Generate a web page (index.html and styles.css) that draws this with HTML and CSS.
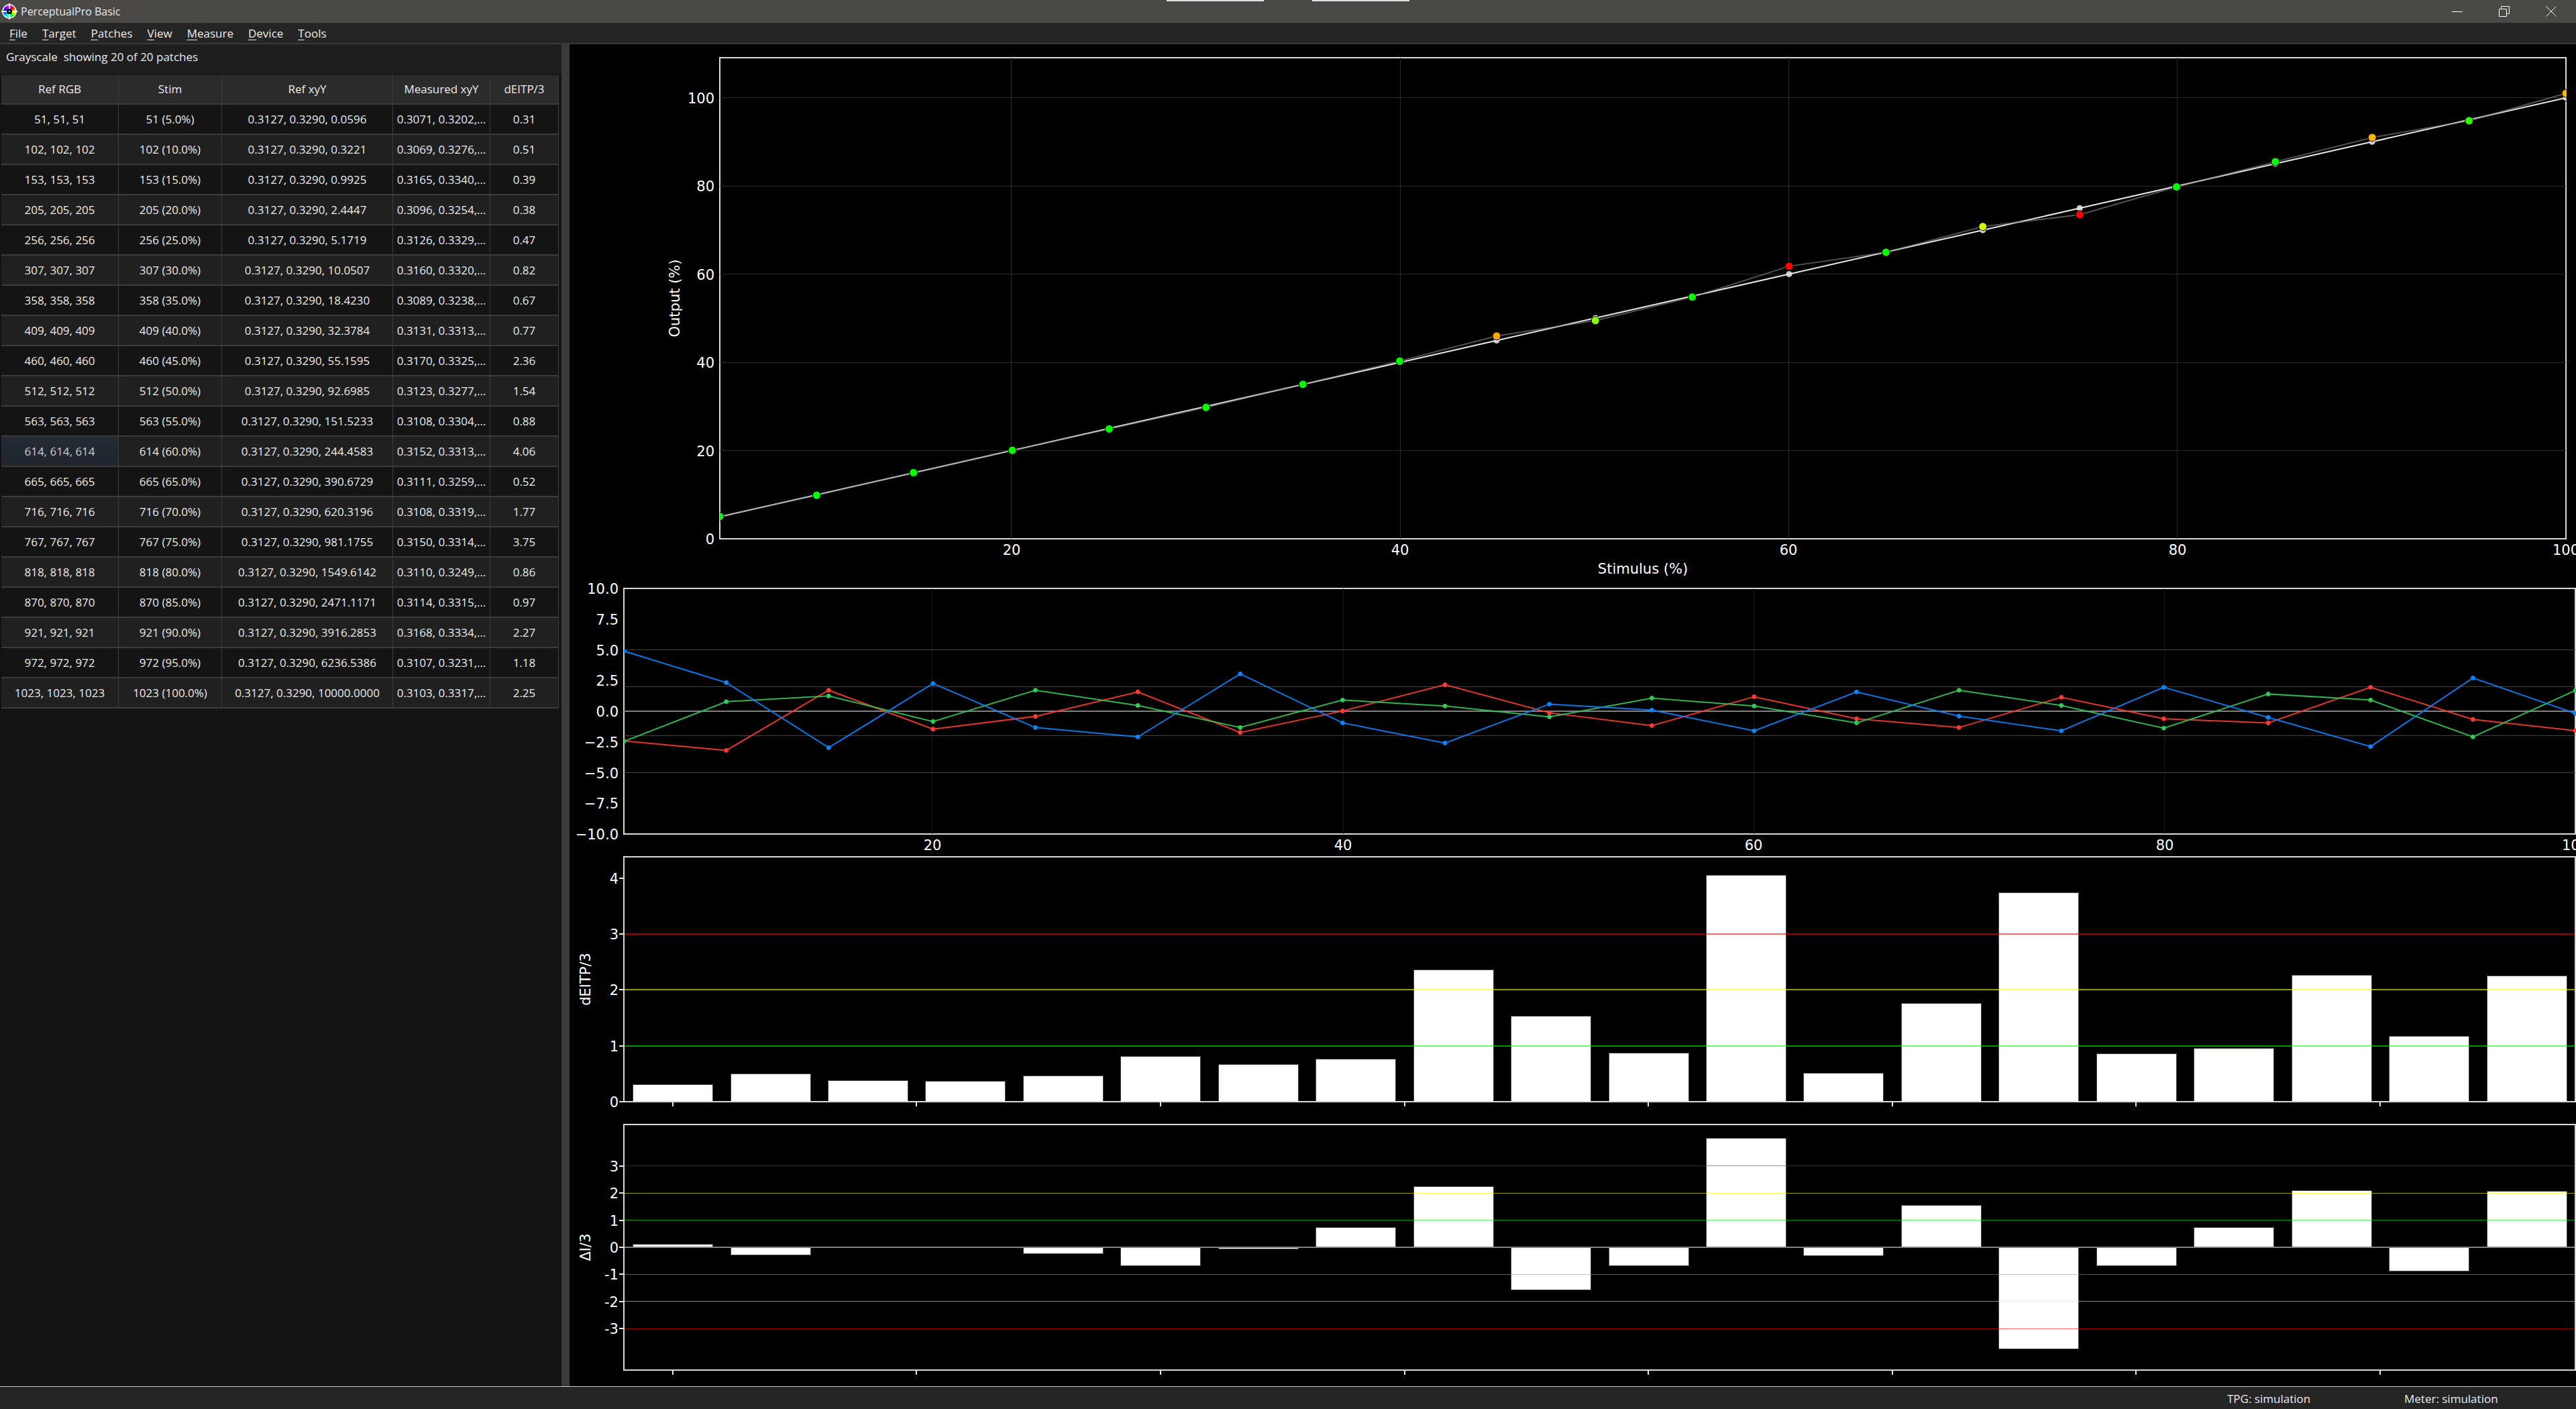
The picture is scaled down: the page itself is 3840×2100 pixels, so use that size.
FILE: index.html
```html
<!DOCTYPE html>
<html lang="en">
<head>
<meta charset="utf-8">
<title>PerceptualPro Basic</title>
<link rel="stylesheet" href="styles.css">
</head>
<body>
<header class="titlebar">
  <div class="logo">
    <svg viewBox="0 0 24 24" width="24" height="24" aria-hidden="true">
      <circle cx="12" cy="12" r="10" fill="none" stroke="#fff" stroke-width="1.5"/>
      <path d="M12 0v8M12 16v8M0 12h8M16 12h8" stroke="#fff" stroke-width="2"/>
      <circle cx="12" cy="12" r="4" fill="#000"/>
      <circle cx="12" cy="12" r="1" fill="#fff"/>
    </svg>
  </div>
  <h1 class="app-title">PerceptualPro Basic</h1>
  <div class="snap-marks"><span></span><span></span></div>
  <div class="window-buttons">
    <button aria-label="Minimize"><svg viewBox="0 0 16 16" width="16" height="16"><path d="M0 8.500h16"/></svg></button>
    <button aria-label="Restore"><svg viewBox="0 0 16 16" width="16" height="16"><path d="M.5 4.500h11v11h-11zM3.500 4V.5h12v11H12"/></svg></button>
    <button aria-label="Close"><svg viewBox="0 0 16 16" width="16" height="16"><path d="M.5.5l15 15M15.500.5l-15 15"/></svg></button>
  </div>
</header>
<nav class="menubar">
  <button><u>F</u>ile</button>
  <button><u>T</u>arget</button>
  <button><u>P</u>atches</button>
  <button><u>V</u>iew</button>
  <button><u>M</u>easure</button>
  <button><u>D</u>evice</button>
  <button><u>T</u>ools</button>
</nav>
<main class="workspace">
  <section class="patches">
    <p class="summary">Grayscale  showing 20 of 20 patches</p>
    <div class="table-wrap">
      <table>
        <colgroup><col class="c-rgb"><col class="c-stim"><col class="c-ref"><col class="c-meas"><col class="c-de"></colgroup>
        <thead><tr><th>Ref RGB</th><th>Stim</th><th>Ref xyY</th><th>Measured xyY</th><th>dEITP/3</th></tr></thead>
        <tbody>
          <tr><td>51, 51, 51</td><td>51 (5.0%)</td><td>0.3127, 0.3290, 0.0596</td><td>0.3071, 0.3202,…</td><td>0.31</td></tr>
          <tr><td>102, 102, 102</td><td>102 (10.0%)</td><td>0.3127, 0.3290, 0.3221</td><td>0.3069, 0.3276,…</td><td>0.51</td></tr>
          <tr><td>153, 153, 153</td><td>153 (15.0%)</td><td>0.3127, 0.3290, 0.9925</td><td>0.3165, 0.3340,…</td><td>0.39</td></tr>
          <tr><td>205, 205, 205</td><td>205 (20.0%)</td><td>0.3127, 0.3290, 2.4447</td><td>0.3096, 0.3254,…</td><td>0.38</td></tr>
          <tr><td>256, 256, 256</td><td>256 (25.0%)</td><td>0.3127, 0.3290, 5.1719</td><td>0.3126, 0.3329,…</td><td>0.47</td></tr>
          <tr><td>307, 307, 307</td><td>307 (30.0%)</td><td>0.3127, 0.3290, 10.0507</td><td>0.3160, 0.3320,…</td><td>0.82</td></tr>
          <tr><td>358, 358, 358</td><td>358 (35.0%)</td><td>0.3127, 0.3290, 18.4230</td><td>0.3089, 0.3238,…</td><td>0.67</td></tr>
          <tr><td>409, 409, 409</td><td>409 (40.0%)</td><td>0.3127, 0.3290, 32.3784</td><td>0.3131, 0.3313,…</td><td>0.77</td></tr>
          <tr><td>460, 460, 460</td><td>460 (45.0%)</td><td>0.3127, 0.3290, 55.1595</td><td>0.3170, 0.3325,…</td><td>2.36</td></tr>
          <tr><td>512, 512, 512</td><td>512 (50.0%)</td><td>0.3127, 0.3290, 92.6985</td><td>0.3123, 0.3277,…</td><td>1.54</td></tr>
          <tr><td>563, 563, 563</td><td>563 (55.0%)</td><td>0.3127, 0.3290, 151.5233</td><td>0.3108, 0.3304,…</td><td>0.88</td></tr>
          <tr><td class="hovered">614, 614, 614</td><td>614 (60.0%)</td><td>0.3127, 0.3290, 244.4583</td><td>0.3152, 0.3313,…</td><td>4.06</td></tr>
          <tr><td>665, 665, 665</td><td>665 (65.0%)</td><td>0.3127, 0.3290, 390.6729</td><td>0.3111, 0.3259,…</td><td>0.52</td></tr>
          <tr><td>716, 716, 716</td><td>716 (70.0%)</td><td>0.3127, 0.3290, 620.3196</td><td>0.3108, 0.3319,…</td><td>1.77</td></tr>
          <tr><td>767, 767, 767</td><td>767 (75.0%)</td><td>0.3127, 0.3290, 981.1755</td><td>0.3150, 0.3314,…</td><td>3.75</td></tr>
          <tr><td>818, 818, 818</td><td>818 (80.0%)</td><td>0.3127, 0.3290, 1549.6142</td><td>0.3110, 0.3249,…</td><td>0.86</td></tr>
          <tr><td>870, 870, 870</td><td>870 (85.0%)</td><td>0.3127, 0.3290, 2471.1171</td><td>0.3114, 0.3315,…</td><td>0.97</td></tr>
          <tr><td>921, 921, 921</td><td>921 (90.0%)</td><td>0.3127, 0.3290, 3916.2853</td><td>0.3168, 0.3334,…</td><td>2.27</td></tr>
          <tr><td>972, 972, 972</td><td>972 (95.0%)</td><td>0.3127, 0.3290, 6236.5386</td><td>0.3107, 0.3231,…</td><td>1.18</td></tr>
          <tr><td>1023, 1023, 1023</td><td>1023 (100.0%)</td><td>0.3127, 0.3290, 10000.0000</td><td>0.3103, 0.3317,…</td><td>2.25</td></tr>
        </tbody>
      </table>
    </div>
  </section>
  <div class="splitter"></div>
  <section class="charts">
    <svg class="chart chart-output" id="output" role="img" aria-label="Output against stimulus"></svg>
    <svg class="chart chart-balance" id="balance" role="img" aria-label="RGB balance"></svg>
    <svg class="chart chart-de" id="de" role="img" aria-label="dEITP/3 per patch"></svg>
    <svg class="chart chart-di" id="di" role="img" aria-label="Delta I/3 per patch"></svg>
  </section>
</main>
<footer class="statusbar">
  <span>TPG: simulation</span>
  <span>Meter: simulation</span>
</footer>
<script src="charts.js"></script>
</body>
</html>
```
FILE: styles.css
```css
* { box-sizing: border-box; }

body {
  margin: 0;
  height: 100vh;
  display: flex;
  flex-direction: column;
  overflow: hidden;
  background: #1e1e1e;
  color: #ebebeb;
  font: 17px/24px "Open Sans", "Noto Sans", sans-serif;
}

button {
  border: 0;
  background: none;
  color: inherit;
  font: inherit;
}

/* Title bar */
.titlebar {
  position: relative;
  display: flex;
  align-items: center;
  height: 34px;
  padding: 0 2px;
  background: #4a4946;
}
.logo {
  width: 24px;
  height: 24px;
  background: radial-gradient(circle, transparent 10px, #4a4946 11px),
    conic-gradient(#f0f, #f00 45deg, #ff0 100deg, #0f0 145deg, #0ff 210deg, #00f 280deg, #f0f);
}
.logo svg { display: block; }
.app-title {
  margin: 0 auto 0 5px;
  font-size: 16px;
  font-weight: 400;
}
.snap-marks {
  position: absolute;
  top: 0;
  left: 50%;
  display: flex;
  gap: 72px;
  transform: translateX(-50%);
}
.snap-marks span {
  width: 145px;
  height: 2px;
  background: #e4e4e4;
}
.window-buttons { display: flex; }
.window-buttons button {
  display: grid;
  place-items: center;
  width: 70px;
  height: 34px;
  padding: 0;
}
.window-buttons svg {
  fill: none;
  stroke: #fff;
}

/* Menu bar */
.menubar {
  display: flex;
  height: 32px;
  padding-left: 3px;
  background: #252525;
  border-bottom: 2px solid #383838;
}
.menubar button { padding: 1px 11px 0; }
.menubar u { text-underline-offset: 3px; }

/* Workspace */
.workspace {
  flex: 1;
  min-height: 0;
  display: grid;
  grid-template-columns: 837px 12px minmax(0, 1fr);
}
.patches {
  display: flex;
  flex-direction: column;
}
.summary {
  margin: 0;
  padding: 7px 9px 14px;
  white-space: pre;
}
.table-wrap {
  flex: 1;
  padding-left: 1px;
  border: 1px solid #101010;
  background: #141414;
}
table {
  width: 831px;
  table-layout: fixed;
  border-collapse: separate;
  border-spacing: 0;
  text-align: center;
}
.c-rgb { width: 175px; }
.c-stim { width: 154px; }
.c-ref { width: 255px; }
.c-meas { width: 145px; }
.c-de { width: 102px; }
th, td {
  padding: 0;
  border-right: 1px solid #3c3c3c;
  border-bottom: 2px solid #3c3c3c;
  font-weight: 400;
  white-space: nowrap;
}
th { height: 44px; background: #2b2b2b; }
td { height: 45px; }
tbody tr:nth-child(even) { background: #202020; }
td.hovered {
  background: linear-gradient(#242c35, #20242c);
  color: #ccc;
}
.splitter { background: #3a3a3a; }

/* Charts */
.charts {
  display: flex;
  flex-direction: column;
  min-width: 0;
  min-height: 0;
  background: #000;
}
.chart {
  display: block;
  width: 100%;
  min-height: 0;
}
.chart-output { flex: 800 0 0; }
.chart-balance { flex: 405 0 0; }
.chart-de { flex: 390 0 0; }
.chart-di { flex: 405 0 0; }
.chart text {
  fill: #fff;
  font: 21px "DejaVu Sans", sans-serif;
}
.frame, .tick { fill: none; stroke: #d9d9d9; stroke-width: 2; }
.tick { stroke: #e6e6e6; }
.grid { stroke: #2b2b2b; }
.grid-faint { stroke: #161616; }
.grid-mid { stroke: #444; }
.zero { stroke: #808080; stroke-width: 2; }
.bar { fill: #fff; stroke: #444; }
.line { fill: none; stroke-width: 2; }
.target { stroke: #e6e6e6; }
.measured { stroke: #888; opacity: .6; }
.target-dot { fill: #ccc; stroke: #000; }
.dot { stroke: #000; }

/* Status bar */
.statusbar {
  display: flex;
  justify-content: flex-end;
  height: 34px;
  padding-top: 6px;
  background: #252525;
  border-top: 1px solid #ccc;
}
.statusbar span { width: 264px; }
.statusbar span:last-child { width: 256px; }
```
FILE: charts.js
```js
const NS = 'http://www.w3.org/2000/svg';
const codes = [51, 102, 153, 205, 256, 307, 358, 409, 460, 512, 563, 614, 665, 716, 767, 818, 870, 921, 972, 1023];
const stim = codes.map(c => c / 10.23);
const output = [5.07, 9.88, 15, 20.05, 24.9, 29.8, 35.03, 40.3, 45.98, 49.5, 54.8, 61.8, 64.97, 70.8, 73.5, 79.8, 85.5, 91, 94.8, 101];
const grade = { 8: '#ffa500', 9: '#8aff00', 11: '#f00', 13: '#cf0', 14: '#f00', 17: '#ffb400', 18: '#2eff00', 19: '#ffb400' };
const rgb = {
  '#ff3b30': [-2.42, -3.19, 1.71, -1.46, -.42, 1.57, -1.73, .02, 2.15, -.13, -1.17, 1.18, -.62, -1.33, 1.13, -.62, -.95, 1.95, -.67, -1.58],
  '#34c759': [-2.46, .78, 1.24, -.84, 1.71, .47, -1.33, .91, .42, -.46, 1.07, .42, -.95, 1.71, .47, -1.38, 1.4, .91, -2.09, 1.69],
  '#0a84ff': [4.9, 2.33, -2.97, 2.26, -1.33, -2.09, 3.04, -.95, -2.59, .58, .09, -1.6, 1.57, -.4, -1.6, 1.95, -.51, -2.88, 2.71, -.18]
};
const de = [.31, .51, .39, .37, .47, .82, .67, .77, 2.36, 1.54, .88, 4.06, .52, 1.77, 3.75, .86, .96, 2.27, 1.18, 2.25];
const di = [.13, -.26, 0, 0, -.21, -.67, -.06, .73, 2.24, -1.55, -.67, 4.03, -.29, 1.56, -3.74, -.66, .73, 2.1, -.87, 2.08];

function add(parent, name, attrs, text) {
  const el = document.createElementNS(NS, name);
  for (const k in attrs) el.setAttribute(k, attrs[k]);
  if (text !== undefined) el.textContent = text;
  parent.append(el);
  return el;
}

// Sets up one plot: margins are [top, right, bottom, left] in pixels.
function plot(id, [mt, mr, mb, ml], [x0, x1], [y0, y1]) {
  const svg = document.getElementById(id);
  svg.replaceChildren();
  const w = svg.clientWidth - ml - mr, h = svg.clientHeight - mt - mb;
  const x = v => (v - x0) / (x1 - x0) * w;
  const y = v => h - (v - y0) / (y1 - y0) * h;
  const area = add(svg, 'svg', { x: ml, y: mt, width: w + 1, height: h + 1 });
  const snap = v => Math.floor(v) + .5;
  return {
    x, y, w, h, area,
    frame: () => add(svg, 'rect', { class: 'frame', x: ml, y: mt, width: w, height: h }),
    raise: () => svg.append(area),
    hline: (v, attrs) => {
      // Two-pixel lines sit on a pixel edge, one-pixel lines on a pixel centre.
      const thick = attrs['stroke-width'] === 2 || attrs.class === 'zero';
      const py = thick ? Math.round(y(v)) : snap(y(v));
      add(area, 'line', { x1: 0, x2: w, y1: py, y2: py, ...attrs });
    },
    vline: (v, cls) => add(area, 'line', { class: cls, x1: snap(x(v)), x2: snap(x(v)), y1: 0, y2: h }),
    line: (xs, ys, attrs) => add(area, 'polyline', { points: xs.map((v, i) => x(v) + ',' + y(ys[i])).join(' '), ...attrs }),
    dot: (a, b, r, attrs) => add(area, 'circle', { cx: x(a), cy: y(b), r, ...attrs }),
    ylabel: (v, s) => add(svg, 'text', { x: ml - 8, y: Math.round(mt + y(v)) + 8, 'text-anchor': 'end' }, s),
    xlabel: (v, s) => add(svg, 'text', { x: Math.round(ml + x(v)), y: mt + h + 24, 'text-anchor': 'middle' }, s),
    xtitle: s => add(svg, 'text', { x: ml + w / 2, y: mt + h + 52, 'text-anchor': 'middle' }, s),
    ytitle: (s, gap) => add(svg, 'text', { transform: `translate(${ml - gap} ${mt + h / 2}) rotate(-90)`, 'text-anchor': 'middle' }, s),
    ytick: v => add(svg, 'line', { class: 'tick', x1: ml - 7, x2: ml, y1: Math.round(mt + y(v)), y2: Math.round(mt + y(v)) }),
    xtick: v => add(svg, 'line', { class: 'tick', x1: Math.round(ml + x(v)), x2: Math.round(ml + x(v)), y1: mt + h, y2: mt + h + 7 })
  };
}

function drawOutput() {
  const p = plot('output', [20, 15, 63, 224], [stim[0], 100], [0, 109.1]);
  [20, 40, 60, 80].forEach(v => p.vline(v, 'grid'));
  [20, 40, 60, 80, 100].forEach(v => { p.hline(v, { class: 'grid' }); p.xlabel(v, v); });
  [0, 20, 40, 60, 80, 100].forEach(v => p.ylabel(v, v));
  stim.forEach(v => p.dot(v, v, 5, { class: 'target-dot' }));
  p.line(stim, stim, { class: 'line target' });
  p.line(stim, output, { class: 'line measured' });
  stim.forEach((v, i) => p.dot(v, output[i], 6, { class: 'dot', fill: grade[i] || '#0f0' }));
  p.frame();
  p.raise();
  p.xtitle('Stimulus (%)');
  p.ytitle('Output (%)', 60);
}

function drawBalance() {
  const p = plot('balance', [11, 1, 28, 81], [stim[0], 100], [-10, 10]);
  [20, 40, 60, 80].forEach(v => p.vline(v, 'grid-faint'));
  [-5, -2, 2, 5].forEach(v => p.hline(v, { class: 'grid-mid' }));
  p.hline(0, { class: 'zero' });
  for (let v = -10; v <= 10; v += 2.5) p.ylabel(v, v.toFixed(1).replace('-', '−'));
  [20, 40, 60, 80, 100].forEach(v => p.xlabel(v, v));
  for (const c in rgb) {
    p.line(stim, rgb[c], { class: 'line', stroke: c, opacity: .9 });
    stim.forEach((v, i) => p.dot(v, rgb[c][i], 3, { fill: c, stroke: c }));
  }
  p.frame();
  p.raise();
}

function bars(p, values) {
  const bw = p.w / 20 * .82;
  values.forEach((v, i) => {
    if (!v) return;
    const left = Math.round(p.x(i) - bw / 2) + .5;
    const top = Math.round(p.y(Math.max(v, 0))) + .5, bottom = Math.round(p.y(Math.min(v, 0))) + .5;
    add(p.area, 'rect', { class: 'bar', x: left, y: top, width: Math.round(bw), height: bottom - top });
  });
  for (let v = 0; v < 20; v += 2.5) p.xtick(v);
}

function drawDe() {
  const p = plot('de', [6, 1, 19, 81], [-.5, 19.5], [0, 4.38]);
  bars(p, de);
  [['#0f0', 1], ['#ff0', 2], ['#f00', 3]].forEach(([c, v]) => p.hline(v, { stroke: c, 'stroke-width': 2, opacity: .6 }));
  [0, 1, 2, 3, 4].forEach(v => { p.ylabel(v, v); p.ytick(v); });
  p.frame();
  p.ytitle('dEITP/3', 50);
}

function drawDi() {
  const p = plot('di', [15, 1, 24, 81], [-.5, 19.5], [-4.52, 4.52]);
  bars(p, di);
  [['#0f0', 1], ['#ff0', 2], ['#f00', 3]].forEach(([c, v]) => {
    p.hline(v, { stroke: c, opacity: .6 });
    p.hline(-v, { stroke: c, opacity: .6 });
  });
  p.hline(0, { class: 'zero' });
  [-3, -2, -1, 0, 1, 2, 3].forEach(v => { p.ylabel(v, v); p.ytick(v); });
  p.frame();
  p.ytitle('ΔI/3', 50);
}

function draw() {
  drawOutput();
  drawBalance();
  drawDe();
  drawDi();
}
draw();
addEventListener('resize', draw);
```
